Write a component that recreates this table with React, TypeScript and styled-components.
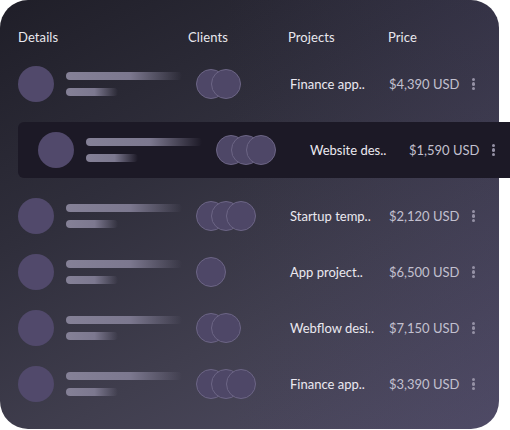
import React from "react";
import styled, { createGlobalStyle } from "styled-components";

const GlobalStyle = createGlobalStyle`
  html, body {
    margin: 0;
    padding: 0;
    background: #ffffff;
  }
  body {
    font-family: "Lato", "Liberation Sans", sans-serif;
  }
`;

const rows = [
  { project: "Finance app..", price: "$4,390 USD", clients: 2 },
  { project: "Website des..", price: "$1,590 USD", clients: 3, active: true },
  { project: "Startup temp..", price: "$2,120 USD", clients: 3 },
  { project: "App project..", price: "$6,500 USD", clients: 1 },
  { project: "Webflow desi..", price: "$7,150 USD", clients: 2 },
  { project: "Finance app..", price: "$3,390 USD", clients: 3 },
];

const App = () => {
  return (
    <Page>
      <GlobalStyle />
      <Card>
        <Header>
          <HeadCell $w={170}>Details</HeadCell>
          <HeadCell $w={100}>Clients</HeadCell>
          <HeadCell $w={100}>Projects</HeadCell>
          <HeadCell $w={84}>Price</HeadCell>
        </Header>
        <List>
          {rows.map((row, i) => (
            <Row key={i} $active={row.active}>
              <DetailsCell>
                <Avatar />
                <Lines>
                  <Line $w={116} />
                  <Line $w={52} />
                </Lines>
              </DetailsCell>
              <ClientsCell>
                {Array.from({ length: row.clients }).map((_, j) => (
                  <Client key={j} />
                ))}
              </ClientsCell>
              <Project>{row.project}</Project>
              <Price>{row.price}</Price>
              <More>
                <Dot />
                <Dot />
                <Dot />
              </More>
            </Row>
          ))}
        </List>
      </Card>
    </Page>
  );
};

const Page = styled.div`
  width: 510px;
  height: 430px;
  overflow: hidden;
`;

const Card = styled.div`
  width: 499px;
  height: 429px;
  box-sizing: border-box;
  padding: 28px 18px 0;
  border-radius: 28px;
  background:
    linear-gradient(90deg, rgba(40, 36, 70, 0) 45%, rgba(66, 60, 100, 0.22) 100%),
    linear-gradient(150deg, #1f1e28 0%, #2f2e3b 35%, #403e4e 65%, #524e66 100%);
`;

const Header = styled.div`
  display: flex;
  height: 18px;
  align-items: center;
  margin-bottom: 10px;
`;

const HeadCell = styled.div<{ $w: number }>`
  width: ${(p) => p.$w}px;
  font-size: 13px;
  color: #e9e8ee;
  letter-spacing: 0.1px;
`;

const List = styled.div`
  display: flex;
  flex-direction: column;
`;

const Row = styled.div<{ $active?: boolean }>`
  display: flex;
  align-items: center;
  height: 56px;
  box-sizing: border-box;
  ${(p) =>
    p.$active &&
    `
    width: 492px;
    padding-left: 20px;
    margin: 10px 0;
    background: #1c1926;
    border-radius: 6px 0 0 6px;
  `}
`;

const DetailsCell = styled.div`
  width: 178px;
  display: flex;
  align-items: center;
  gap: 12px;
`;

const Avatar = styled.div`
  width: 36px;
  height: 36px;
  border-radius: 50%;
  background: #51496b;
  flex-shrink: 0;
`;

const Lines = styled.div`
  display: flex;
  flex-direction: column;
  gap: 8px;
`;

const Line = styled.div<{ $w: number }>`
  width: ${(p) => p.$w}px;
  height: 8px;
  border-radius: 4px;
  background: linear-gradient(
    90deg,
    #858197 0%,
    #7c788f 55%,
    rgba(110, 106, 130, 0) 100%
  );
`;

const ClientsCell = styled.div`
  width: 94px;
  display: flex;
  align-items: center;
`;

const Client = styled.div`
  width: 28px;
  height: 28px;
  border-radius: 50%;
  background: #4e4767;
  border: 1px solid #6c6585;
  flex-shrink: 0;
  & + & {
    margin-left: -15px;
  }
`;

const Project = styled.div`
  width: 99px;
  font-size: 13px;
  color: #ebe9f0;
  white-space: nowrap;
`;

const Price = styled.div`
  width: 84px;
  font-size: 13px;
  color: #c3c0cf;
  white-space: nowrap;
`;

const More = styled.div`
  display: flex;
  flex-direction: column;
  gap: 1.5px;
  width: 4px;
  margin-left: -1px;
`;

const Dot = styled.div`
  width: 3.2px;
  height: 3.2px;
  border-radius: 50%;
  background: #9591a5;
`;

export default App;
